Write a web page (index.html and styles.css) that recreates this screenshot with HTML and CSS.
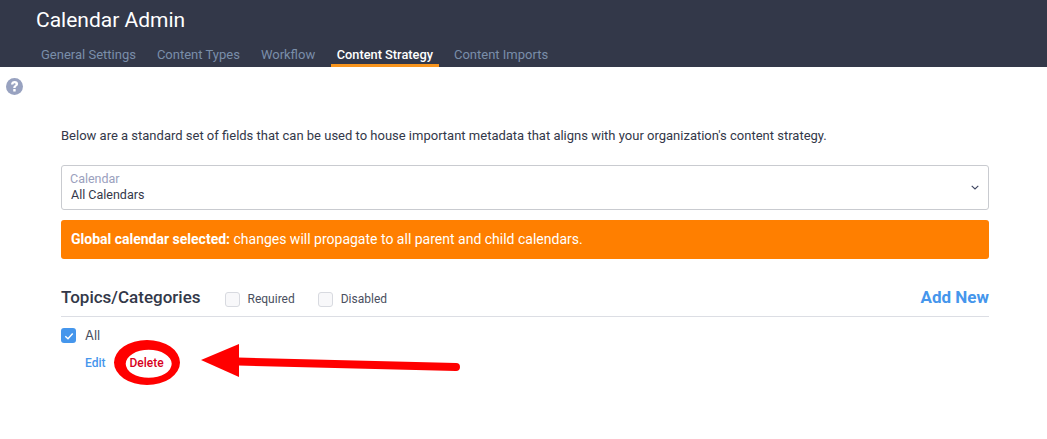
FILE: index.html
```html
<!DOCTYPE html>
<html lang="en">

<head>
    <meta charset="UTF-8">
    <title>Calendar Admin</title>
    <link rel="stylesheet" href="styles.css">
</head>

<body>
    <header class="top-bar">
        <h1>Calendar Admin</h1>
        <nav class="tabs">
            <a class="tab">General Settings</a>
            <a class="tab">Content Types</a>
            <a class="tab">Workflow</a>
            <a class="tab active">Content Strategy</a>
            <a class="tab">Content Imports</a>
        </nav>
    </header>

    <div class="help-row">
        <svg class="help-icon" viewBox="0 0 16 16" width="17" height="17">
            <circle cx="8" cy="8" r="8" fill="#98a2c0"/>
            <path d="M4.700 6c.1-2 1.600-3.100 3.500-3.100s3.200 1.100 3.200 2.600c0 2.300-2.300 2.300-2.300 3.900H6.800c0-2.600 2.200-2.600 2.200-3.600 0-.5-.4-.9-1-.9s-1 .4-1.100 1.100z" fill="#fff"/>
            <rect x="6.800" y="10.300" width="2.300" height="2.400" rx=".3" fill="#fff"/>
        </svg>
    </div>

    <main class="content">
        <p class="intro">Below are a standard set of fields that can be used to house important metadata that aligns with your organization's content strategy.</p>

        <div class="select-box">
            <div>
                <div class="select-label">Calendar</div>
                <div class="select-value">All Calendars</div>
            </div>
            <svg class="chevron" viewBox="0 0 8 5" width="8" height="5">
                <path d="M.7.8 4 4 7.300.8" fill="none" stroke="#3d4560" stroke-width="1.100"/>
            </svg>
        </div>

        <div class="notice"><strong>Global calendar selected:</strong> changes will propagate to all parent and child calendars.</div>

        <div class="section-head">
            <h2>Topics/Categories</h2>
            <label class="check-label"><span class="box"></span>Required</label>
            <label class="check-label"><span class="box"></span>Disabled</label>
            <a class="add-new">Add New</a>
        </div>

        <div class="item">
            <span class="box checked">
                <svg viewBox="0 0 16 16" width="16" height="16"><path d="M4.300 8.300 7 10.800 11.700 5.600" fill="none" stroke="#fff" stroke-width="1.500"/></svg>
            </span>
            All
        </div>
        <div class="item-actions">
            <a class="edit">Edit</a>
            <a class="delete">Delete</a>
        </div>
    </main>

    <!-- red annotation drawn on top of the screenshot -->
    <svg class="markup" viewBox="0 0 1047 439" width="1047" height="439">
        <path fill-rule="evenodd" fill="#f00" d="M114 362.500a33 22.500 0 1 0 66 0a33 22.500 0 1 0-66 0ZM125.700 363.800a23 14 0 1 0 46 0a23 14 0 1 0-46 0Z"/>
        <path d="M201 360 239 344V377Z" fill="#f00"/>
        <path d="M238 361.500 456 367" fill="none" stroke="#f00" stroke-width="8" stroke-linecap="round"/>
    </svg>
</body>

</html>
```

FILE: styles.css
```css
* {
    box-sizing: border-box;
}

body {
    margin: 0;
    font-family: Roboto, "Liberation Sans", sans-serif;
    font-size: 13px;
    color: #333849;
    background-color: #fff;
    overflow: hidden;
}

.top-bar {
    height: 67px;
    background-color: #333849;
    padding-top: 6px;
}

.top-bar h1 {
    margin: 0 0 0 36px;
    font-size: 21px;
    font-weight: 400;
    line-height: 28px;
    color: #fff;
}

.tabs {
    display: flex;
    margin: 9px 0 0 30.500px;
}

.tab {
    height: 24px;
    padding: 4px 10.500px 0;
    line-height: 16px;
    color: #7a8ea9;
}

.tab.active {
    padding: 4px 6.500px 0 5.500px;
    margin: 0 4px 0 5.500px;
    font-size: 12.800px;
    color: #fff;
    font-weight: 500;
    border-bottom: 3px solid #f7941d;
}

.help-row {
    height: 24px;
    padding: 11px 0 0 6px;
}

.help-icon {
    display: block;
}

.content {
    width: 928px;
    margin-left: 61px;
}

.intro {
    margin: 0;
    padding-top: 27px;
    line-height: 36px;
    height: 74px;
}

.select-box {
    display: flex;
    align-items: center;
    justify-content: space-between;
    height: 45px;
    padding: 0 9px 2px 9px;
    border: 1px solid #c9cbd0;
    border-radius: 3px;
}

.select-label {
    margin-left: -1px;
    font-size: 12.500px;
    line-height: 16px;
    color: #9aa0bd;
}

.select-value {
    font-size: 12.500px;
    line-height: 16px;
}

.chevron {
    margin-top: 2px;
}

.notice {
    height: 39px;
    margin-top: 10px;
    padding-left: 10px;
    line-height: 38px;
    font-size: 14px;
    color: #fff;
    background-color: #ff7f00;
    border-radius: 3px;
}

.section-head {
    display: flex;
    align-items: center;
    height: 39px;
    margin-top: 19px;
    border-bottom: 1px solid #dcdee4;
}

.section-head h2 {
    margin: 0 24px 0 0;
    font-size: 17px;
    font-weight: 500;
}

.check-label {
    display: flex;
    align-items: center;
    margin-top: 4px;
    margin-right: 23px;
    font-size: 12px;
    color: #4a4f60;
}

.box {
    display: inline-block;
    width: 15px;
    height: 15px;
    margin-right: 8px;
    background-color: #f8f8fa;
    border: 1px solid #d8dae0;
    border-radius: 3px;
}

.box.checked {
    margin-right: 9px;
    background-color: #4596ec;
    border: none;
}

.box svg {
    display: block;
}

.add-new {
    margin-left: auto;
    font-size: 17px;
    font-weight: 700;
    color: #4596ec;
}

.item {
    display: flex;
    align-items: center;
    margin-top: 11px;
    line-height: 15px;
    font-family: Inter, sans-serif;
    font-size: 13px;
    color: #4a4f60;
}

.item-actions {
    display: flex;
    gap: 24px;
    margin: 12px 0 0 24px;
    font-size: 12px;
    font-weight: 500;
    line-height: 16px;
}

.edit {
    color: #4596ec;
}

.delete {
    color: #d8001c;
}

.markup {
    position: absolute;
    top: 0;
    left: 0;
}
```
